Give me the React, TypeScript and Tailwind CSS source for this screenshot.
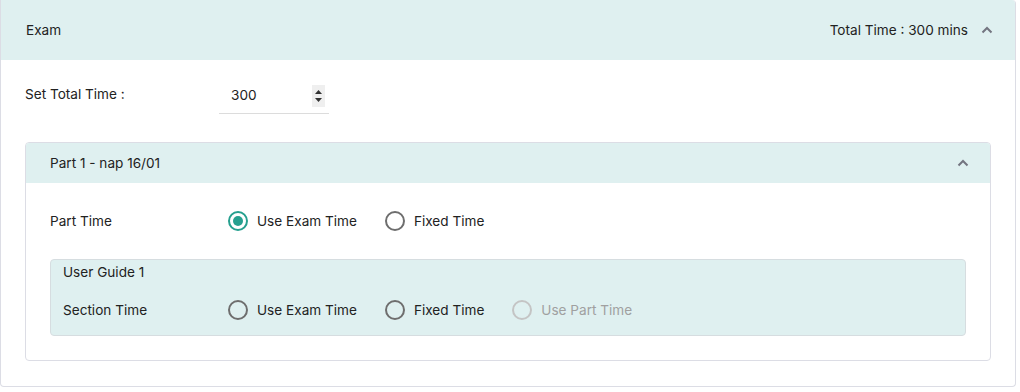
import React from "react";

function Chevron() {
  return (
    <svg width="12" height="8" viewBox="0 0 12 8" fill="none">
      <path d="M1.5 6.5 L6 2 L10.5 6.5" stroke="#737580" strokeWidth="2" />
    </svg>
  );
}

function Radio({ label, checked, disabled }: { label: string; checked?: boolean; disabled?: boolean }) {
  return (
    <div className="flex items-center gap-[9px]">
      <div
        className={
          "w-[20px] h-[20px] rounded-full border-2 flex items-center justify-center " +
          (checked ? "border-[#26a08f]" : disabled ? "border-[#c4c4c4]" : "border-[#6e6e6e]")
        }
      >
        {checked && <div className="w-[10px] h-[10px] rounded-full bg-[#26a08f]" />}
      </div>
      <span className={disabled ? "text-[#a0a0a0]" : "text-[#222]"}>{label}</span>
    </div>
  );
}

export default function App() {
  return (
    <div className="w-[1020px] h-[392px] bg-white text-[13.6px] text-[#222]" style={{ fontFamily: "Inter, 'Noto Sans', sans-serif" }}>
      <div className="w-[1016px] h-[387px] border border-[#dcdde5] border-t-0 border-l-[1px] rounded-tr-[4px] rounded-b-[4px] overflow-hidden">
        <div className="h-[60px] bg-[#dff0f0] pl-[25px] pr-[22px] flex items-center justify-between">
          <span>Exam</span>
          <div className="flex items-center gap-[13px]">
            <span>Total Time : 300 mins</span>
            <Chevron />
          </div>
        </div>
        <div className="px-[24px]">
          <div className="flex items-center h-[70px]">
            <div className="w-[194px] mb-[2px]">Set Total Time :</div>
            <div className="w-[110px] h-[36px] border-b border-[#dcdcdc] flex items-center pl-[12px] pr-[4px] justify-between mt-[2px]">
              <span>300</span>
              <div className="w-[13px] h-[22px] bg-[#efefef] flex flex-col items-center justify-center gap-[4px]">
                <svg width="7" height="4" viewBox="0 0 7 4"><path d="M0 4 L3.5 0 L7 4Z" fill="#333" /></svg>
                <svg width="7" height="4" viewBox="0 0 7 4"><path d="M0 0 L3.5 4 L7 0Z" fill="#333" /></svg>
              </div>
            </div>
          </div>
          <div className="mt-[12px] border border-[#dcdde5] rounded-[4px] overflow-hidden">
            <div className="h-[40px] bg-[#dff0f0] pl-[24px] pr-[21px] flex items-center justify-between">
              <span>Part 1 - nap 16/01</span>
              <Chevron />
            </div>
            <div className="px-[24px] pb-[24px]">
              <div className="flex items-center h-[76px]">
                <div className="w-[178px]">Part Time</div>
                <div className="flex items-center gap-[28px]">
                  <Radio label="Use Exam Time" checked />
                  <Radio label="Fixed Time" />
                </div>
              </div>
              <div className="bg-[#dff0f0] border border-[#d6dde0] rounded-[4px] px-[12px] h-[77px]">
                <div className="h-[24px] flex items-center">User Guide 1</div>
                <div className="flex items-center h-[52px]">
                  <div className="w-[165px]">Section Time</div>
                  <div className="flex items-center gap-[28px]">
                    <Radio label="Use Exam Time" />
                    <Radio label="Fixed Time" />
                    <Radio label="Use Part Time" disabled />
                  </div>
                </div>
              </div>
            </div>
          </div>
        </div>
      </div>
    </div>
  );
}
